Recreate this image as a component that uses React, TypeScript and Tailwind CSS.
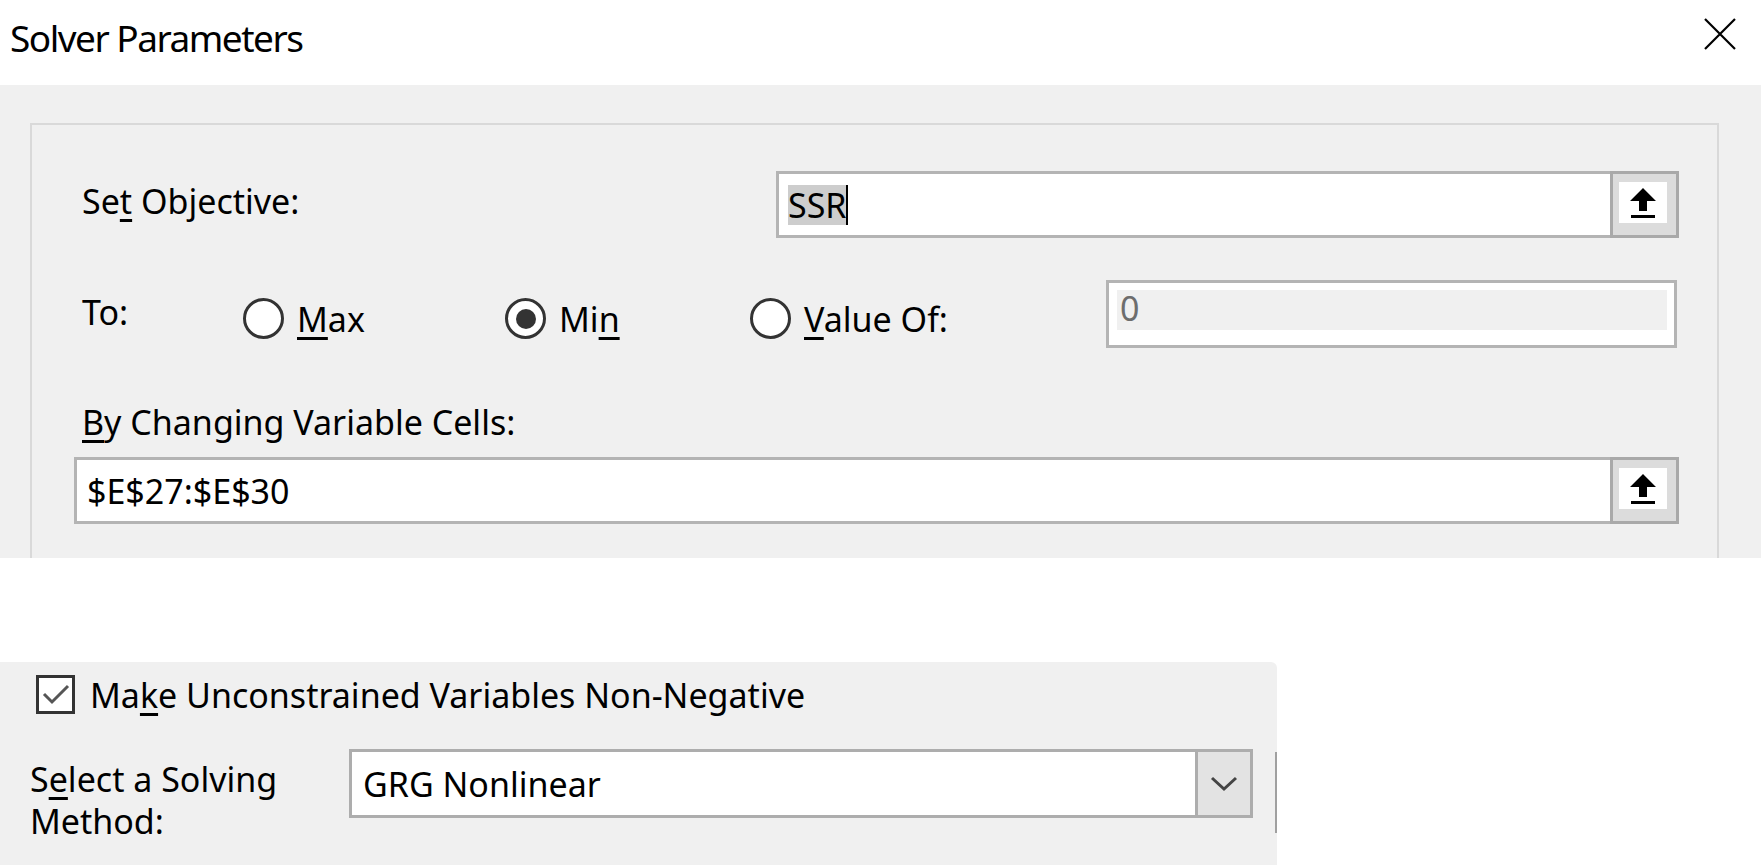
import React from "react";

const Key: React.FC<{ children: React.ReactNode }> = ({ children }) => (
  <span className="underline decoration-[length:3px] underline-offset-[5px]">{children}</span>
);

const UpArrow = () => (
  <svg width="28" height="32" viewBox="0 0 28 32">
    <path d="M14 1 L27 14 L18 14 L18 24 L10 24 L10 14 L1 14 Z" fill="#000" />
    <rect x="2" y="28" width="24" height="3" fill="#000" />
  </svg>
);

const RefButton: React.FC = () => (
  <div className="w-[69px] h-full shrink-0 border-[3px] border-[#a9a9a9] bg-[#dcdcdc] pl-[6px] pr-[9px] pt-[8px] pb-[12px] flex">
    <div className="flex-1 bg-white flex items-center justify-center">
      <UpArrow />
    </div>
  </div>
);

const Radio: React.FC<{ checked?: boolean; width: string; children: React.ReactNode }> = ({ checked, width, children }) => (
  <div className={`flex items-start shrink-0 ${width}`}>
    <div className="mt-[18px] w-[41px] h-[41px] rounded-full border-[3px] border-[#333333] bg-white flex items-center justify-center">
      {checked && <div className="w-[20px] h-[20px] rounded-full bg-[#333333]" />}
    </div>
    <div className="ml-[13px] mt-[22px] leading-[34px]">{children}</div>
  </div>
);

export default function App() {
  return (
    <div className="w-[1764px] h-[865px] bg-white overflow-hidden text-black text-[34px] font-['Noto_Sans',sans-serif]">
      {/* title bar */}
      <div className="h-[85px] flex items-start justify-between">
        <div className="pl-[10px] pt-[19px] text-[37px] leading-[37px] tracking-[-1.5px]">Solver Parameters</div>
        <div className="pt-[18px] pr-[28px]">
          <svg width="32" height="32" viewBox="0 0 32 32">
            <path d="M1 1 L31 31 M31 1 L1 31" stroke="#000" strokeWidth="2.2" />
          </svg>
        </div>
      </div>

      {/* main gray panel */}
      <div className="w-[1761px] h-[473px] bg-[#f0f0f0] pt-[38px] pl-[30px]">
        <div className="w-[1689px] h-[435px] border-2 border-b-0 border-[#d9d9d9] flex flex-col">
          {/* set objective */}
          <div className="flex items-start mt-[46px] pl-[50px]">
            <div className="w-[694px] shrink-0 mt-[13px] leading-[34px]">
              Se<Key>t</Key> Objective:
            </div>
            <div className="flex h-[67px] w-[903px]">
              <div className="flex-1 h-full border-[3px] border-r-0 border-[#b4b4b4] bg-white pl-[9px] flex items-center">
                <span className="bg-[#cdcdcd] h-[40px] leading-[40px]">SSR</span>
                <span className="w-[2px] h-[40px] bg-black" />
              </div>
              <RefButton />
            </div>
          </div>

          {/* to: */}
          <div className="flex items-start mt-[42px] pl-[50px]">
            <div className="w-[161px] shrink-0 mt-[15px] leading-[34px]">To:</div>
            <Radio width="w-[262px]">
              <Key>M</Key>ax
            </Radio>
            <Radio width="w-[245px]" checked>
              Mi<Key>n</Key>
            </Radio>
            <Radio width="w-[356px]">
              <Key>V</Key>alue Of:
            </Radio>
            <div className="w-[571px] h-[68px] shrink-0 border-[3px] border-[#b4b4b4] bg-white pl-[8px] pr-[7px] pt-[7px] pb-[15px]">
              <div className="h-full bg-[#f0f0f0] pl-[3px] pt-[1px] leading-[34px] text-[#6d6d6d]">0</div>
            </div>
          </div>

          {/* by changing */}
          <div className="mt-[57px] pl-[50px] leading-[34px]">
            <Key>B</Key>y Changing Variable Cells:
          </div>
          <div className="mt-[18px] pl-[42px]">
            <div className="flex h-[67px] w-[1605px]">
              <div className="flex-1 h-full border-[3px] border-r-0 border-[#b4b4b4] bg-white pl-[10px] flex items-center leading-[34px]">
                $E$27:$E$30
              </div>
              <RefButton />
            </div>
          </div>
        </div>
      </div>

      {/* options panel */}
      <div className="mt-[104px] w-[1277px] h-[203px] bg-[#f0f0f0] rounded-tr-[6px]">
        <div className="flex items-center pt-[13px] pl-[36px]">
          <div className="w-[39px] h-[39px] border-[3px] border-[#333333] bg-white flex items-center justify-center">
            <svg width="33" height="33" viewBox="0 0 33 33">
              <path d="M5 16 L13 24 L29 8" fill="none" stroke="#555555" strokeWidth="3" />
            </svg>
          </div>
          <div className="ml-[15px] leading-[34px]">
            Ma<Key>k</Key>e Unconstrained Variables Non-Negative
          </div>
        </div>

        <div className="flex items-start mt-[35px] pl-[30px]">
          <div className="w-[319px] shrink-0 mt-[9px] leading-[42px]">
            S<Key>e</Key>lect a Solving
            <br />
            Method:
          </div>
          <div className="w-[904px] h-[69px] shrink-0 border-[3px] border-[#adadad] bg-white flex">
            <div className="flex-1 pl-[11px] flex items-center leading-[34px]">GRG Nonlinear</div>
            <div className="w-[55px] h-full border-l-[3px] border-[#adadad] bg-[#e3e3e3] flex items-center justify-center">
              <svg width="28" height="16" viewBox="0 0 28 16">
                <path d="M2 2 L14 13 L26 2" fill="none" stroke="#444444" strokeWidth="3" />
              </svg>
            </div>
          </div>
          <div className="ml-[22px] mt-[3px] w-[2px] h-[81px] bg-[#a0a0a0]" />
        </div>
      </div>
    </div>
  );
}
